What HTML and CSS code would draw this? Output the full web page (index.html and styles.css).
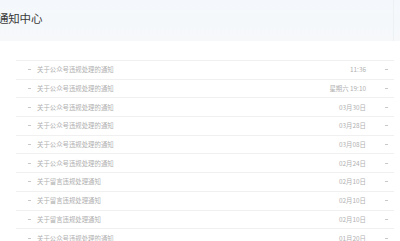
FILE: index.html
```html
<!DOCTYPE html>
<html lang="zh">
<head>
<meta charset="utf-8">
<link rel="stylesheet" href="styles.css">
</head>
<body>
<div class="page">
  <header class="head">
    <h1 class="title">通知中心</h1>
    <div class="scroll-edge"></div>
  </header>
  <ul class="list">
    <li class="row"><span class="dot"></span><span class="name">关于公众号违规处理的通知</span><span class="date">11:36</span><span class="arrow"></span></li>
    <li class="row"><span class="dot"></span><span class="name">关于公众号违规处理的通知</span><span class="date">星期六 19:10</span><span class="arrow"></span></li>
    <li class="row"><span class="dot"></span><span class="name">关于公众号违规处理的通知</span><span class="date">03月30日</span><span class="arrow"></span></li>
    <li class="row"><span class="dot"></span><span class="name">关于公众号违规处理的通知</span><span class="date">03月28日</span><span class="arrow"></span></li>
    <li class="row"><span class="dot"></span><span class="name">关于公众号违规处理的通知</span><span class="date">03月08日</span><span class="arrow"></span></li>
    <li class="row"><span class="dot"></span><span class="name">关于公众号违规处理的通知</span><span class="date">02月24日</span><span class="arrow"></span></li>
    <li class="row"><span class="dot"></span><span class="name">关于留言违规处理通知</span><span class="date">02月10日</span><span class="arrow"></span></li>
    <li class="row"><span class="dot"></span><span class="name">关于留言违规处理通知</span><span class="date">02月10日</span><span class="arrow"></span></li>
    <li class="row"><span class="dot"></span><span class="name">关于留言违规处理通知</span><span class="date">02月10日</span><span class="arrow"></span></li>
    <li class="row"><span class="dot"></span><span class="name">关于公众号违规处理的通知</span><span class="date">01月20日</span><span class="arrow"></span></li>
  </ul>
</div>
</body>
</html>
```
FILE: styles.css
```css
html, body {
  margin: 0;
  padding: 0;
  background: #ffffff;
  overflow: hidden;
}
body {
  font-family: "Noto Sans CJK SC", "Noto Sans", sans-serif;
  color: #333;
}
.page {
  width: 400px;
  height: 241px;
  overflow: hidden;
}
.head {
  position: relative;
  height: 41px;
  background: linear-gradient(#f4f8fc, #f6f8fa);
  display: flex;
  align-items: flex-start;
}
.title {
  margin: 10px 0 0 -3px;
  font-size: 11.5px;
  font-weight: normal;
  line-height: 16px;
  color: #3a3a3a;
  letter-spacing: -0.2px;
}
.scroll-edge {
  position: absolute;
  right: 6px;
  top: 0;
  bottom: 0;
  width: 1px;
  background: #eef1f4;
}
.list {
  list-style: none;
  margin: 19px 0 0 16px;
  padding: 0;
  width: 378px;
  border-top: 1px solid #f0f0f0;
}
.row {
  height: 17.7px;
  border-bottom: 1px solid #f0f0f0;
  display: flex;
  align-items: center;
  font-size: 6.4px;
  color: #b0b0b0;
}
.dot {
  width: 3px;
  height: 1px;
  background: #c8c8c8;
  margin-left: 12px;
  margin-right: 6px;
}
.name {
  flex: 1;
  white-space: nowrap;
}
.date {
  width: 80px;
  text-align: right;
  white-space: nowrap;
}
.arrow {
  width: 3px;
  height: 1px;
  background: #c8c8c8;
  margin-left: 19px;
  margin-right: 6px;
}
```
